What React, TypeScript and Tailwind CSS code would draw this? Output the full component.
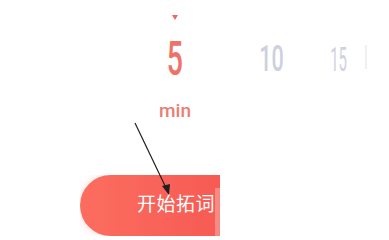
import React from "react";

const font = { fontFamily: "Roboto, 'Noto Sans CJK SC', sans-serif" };

export default function App() {
  return (
    <div className="relative h-[240px] w-[389px] overflow-hidden bg-white" style={font}>
      {/* 时长选择 */}
      <div className="flex items-start pl-[155px] pt-[15px]">
        <div className="flex w-[40px] flex-col items-center">
          <div className="h-0 w-0 border-x-[3px] border-t-[5px] border-x-transparent border-t-[#ea6a60]" />
          <div className="mt-[14px] scale-x-[0.58] text-[49px] font-medium leading-none text-[#ef7268]">5</div>
          <div className="mt-[18px] text-[19px] font-medium leading-none text-[#ea7d74]">min</div>
        </div>
        <div className="ml-[56px] mt-[26px] flex w-[40px] justify-center">
          <span className="scale-x-[0.6] text-[36px] font-medium leading-none text-[#cdd0dd]">10</span>
        </div>
        <div className="ml-[28px] mt-[28px] flex w-[40px] justify-center">
          <span className="scale-x-[0.45] text-[33px] leading-none text-[#cfd2de]">15</span>
        </div>
        <div className="ml-[6px] mt-[30px] h-[24px] w-[2px] bg-[#eef0f4]" />
      </div>

      {/* 开始按钮 */}
      <div className="mt-[55px] flex pl-[80px]">
        <div className="relative w-[140px] overflow-hidden">
          <div className="flex h-[61px] w-[200px] items-center rounded-l-full bg-gradient-to-r from-[#fb6d5f] to-[#f5524f] pl-[57px] shadow-[0_0_10px_rgba(250,100,90,0.25)]">
            <span className="text-[19px] tracking-[0.5px] text-white">开始拓词</span>
          </div>
          <div className="absolute right-0 top-[13px] h-[60px] w-[5px] bg-[#f8b9b3]/50" />
        </div>
      </div>

      {/* 指示箭头 */}
      <svg className="absolute left-0 top-0" width="389" height="240" viewBox="0 0 389 240">
        <line x1="135" y1="123" x2="168" y2="192" stroke="#1f1f1f" strokeWidth="1.2" />
        <path d="M169 195 L162 186 L170 184 Z" fill="#1f1f1f" />
      </svg>
    </div>
  );
}
